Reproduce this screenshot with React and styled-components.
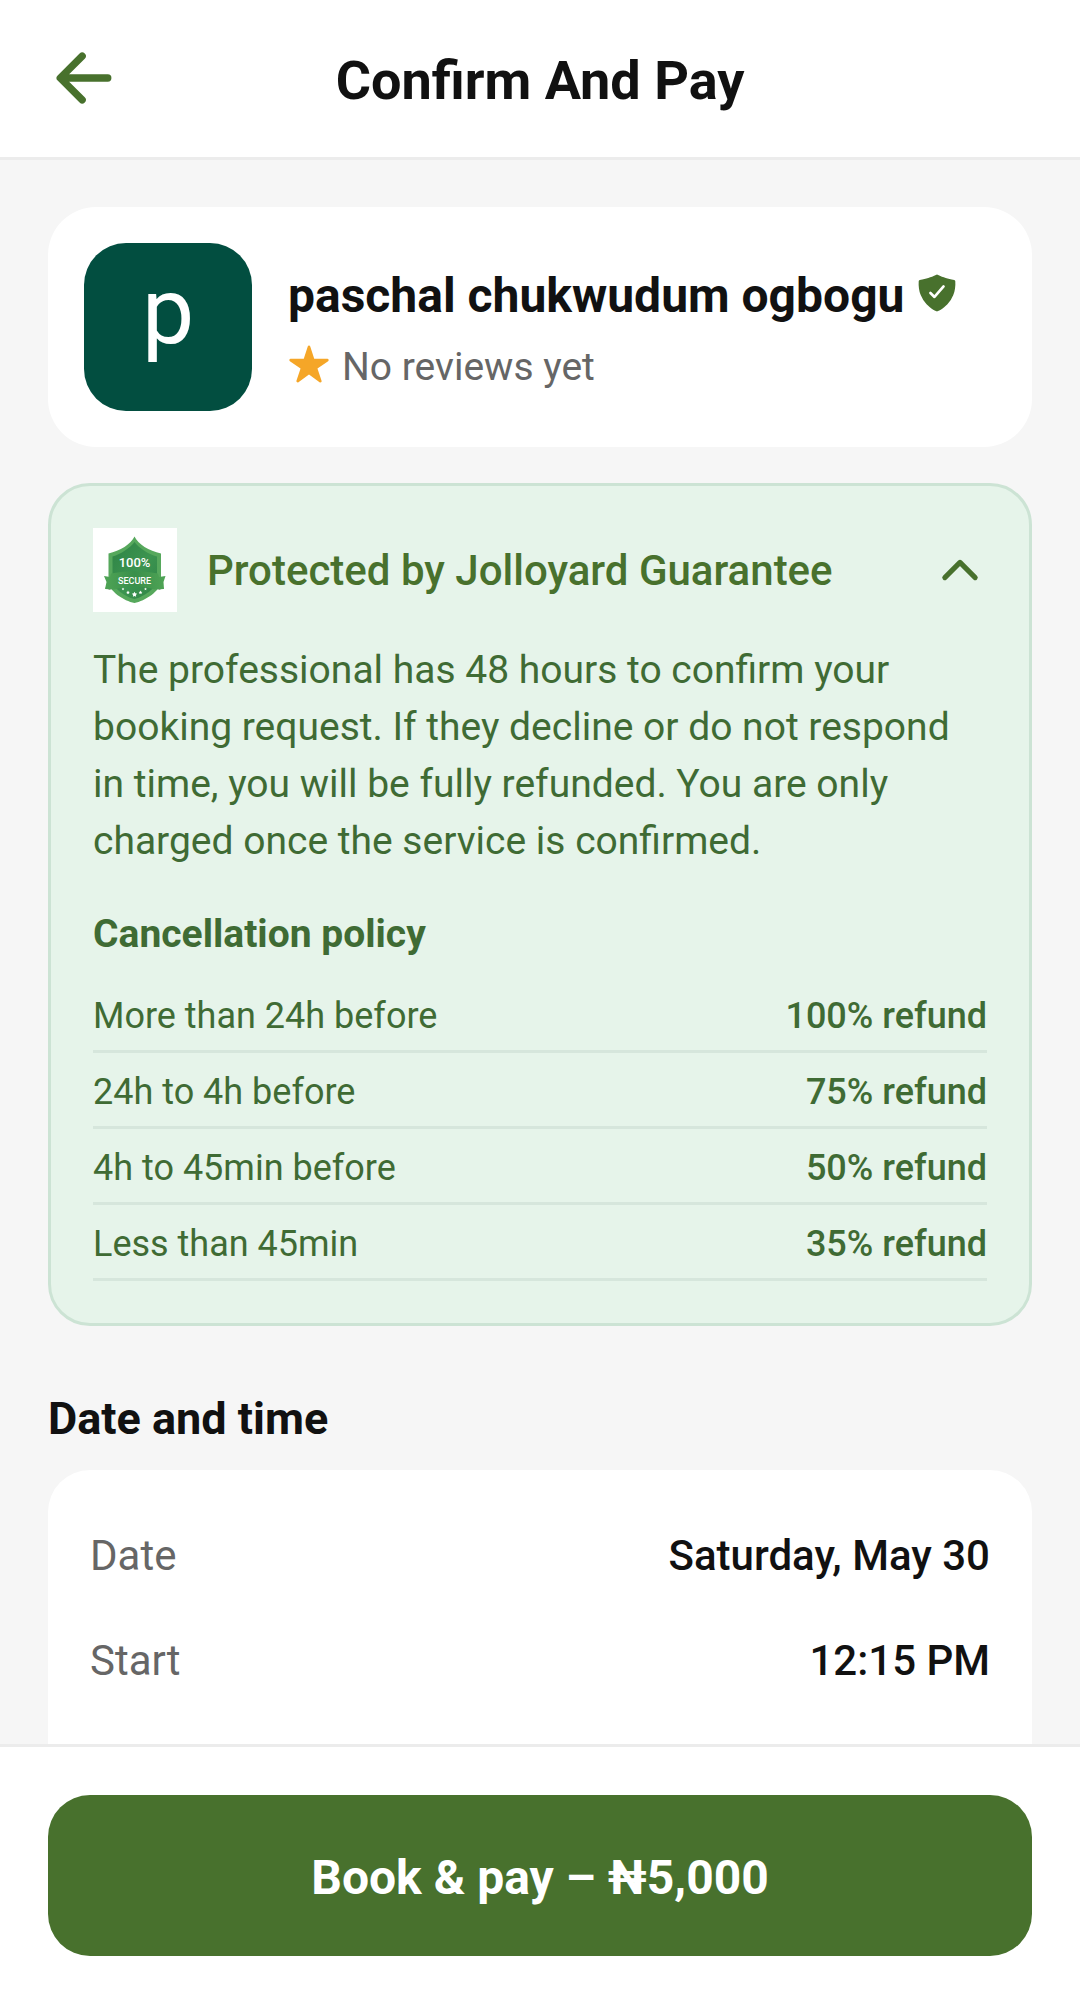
import React, { useState } from 'react';
import styled, { createGlobalStyle } from 'styled-components';
import { IoArrowBack, IoChevronUp, IoChevronDown, IoShieldCheckmark, IoStar } from 'react-icons/io5';

const color = {
  green: '#48712d',
  greenText: '#3f6b34',
  mint: '#e6f4ea',
  mintBorder: '#cce3d4',
  mintRule: '#d6e6dc',
  page: '#f6f6f6',
  rule: '#ececec',
  ink: '#111111',
  muted: '#666666',
  star: '#f5a628',
  avatar: '#024e40',
};

const GlobalStyle = createGlobalStyle`
  *, *::before, *::after { box-sizing: border-box; }
  body { margin: 0; background: ${color.page}; }
  body, button { font-family: Roboto, "Noto Sans", sans-serif; }
  h1, h2, h3, p, dl, dd { margin: 0; }
`;

const Screen = styled.div`
  display: flex;
  flex-direction: column;
  height: 100vh;
  color: ${color.ink};
`;

const Header = styled.header`
  flex: none;
  display: grid;
  grid-template-columns: 1fr auto 1fr;
  align-items: start;
  padding: 42px 48px 38px;
  background: #fff;
  border-bottom: 3px solid ${color.rule};
`;

const IconButton = styled.button`
  display: flex;
  align-items: center;
  justify-content: center;
  width: ${(p) => p.$size}px;
  height: ${(p) => p.$size}px;
  padding: 0;
  border: 0;
  background: none;
  color: ${color.green};
  cursor: pointer;

  svg { flex: none; }
`;

const Title = styled.h1`
  font-size: 54px;
  line-height: 77px;
  font-weight: 700;
`;

const Content = styled.main`
  flex: 1;
  min-height: 0;
  display: flex;
  flex-direction: column;
  padding: 47px 48px 0;
  overflow-y: auto;
  scrollbar-width: none;
`;

const ProfileCard = styled.section`
  flex: none;
  display: flex;
  align-items: center;
  gap: 36px;
  padding: 36px;
  border-radius: 48px;
  background: #fff;
`;

const Avatar = styled.div`
  flex: none;
  display: flex;
  align-items: center;
  justify-content: center;
  width: 168px;
  height: 168px;
  padding-bottom: 30px;
  border-radius: 42px;
  background: ${color.avatar};
  color: #fff;
  font-size: 93px;
  line-height: 108px;
`;

const ProfileInfo = styled.div`
  display: flex;
  flex-direction: column;
  gap: 14px;
`;

const IconLine = styled.div`
  display: flex;
  align-items: center;
  gap: 12px;
`;

const InlineIcon = styled.span`
  display: flex;
  padding-bottom: 6px;
  color: ${(p) => p.$color};
`;

const Name = styled.h2`
  font-size: 48px;
  line-height: 66px;
  font-weight: 700;
`;

const Reviews = styled.span`
  font-size: 39px;
  line-height: 48px;
  color: ${color.muted};
`;

const GuaranteeCard = styled.section`
  flex: none;
  margin-top: 36px;
  padding: 42px;
  border: 3px solid ${color.mintBorder};
  border-radius: 42px;
  background: ${color.mint};
  color: ${color.greenText};
`;

const GuaranteeHead = styled.div`
  display: flex;
  align-items: center;
  gap: 30px;
`;

const Badge = styled.div`
  flex: none;
  display: flex;
  width: 84px;
  height: 84px;
  background: #fff;
`;

const GuaranteeTitle = styled.h2`
  flex: 1;
  font-size: 42px;
  line-height: 57px;
  font-weight: 500;
  color: ${color.green};
`;

const GuaranteeText = styled.p`
  margin-top: 30px;
  font-size: 39px;
  line-height: 57px;
`;

const PolicyTitle = styled.h3`
  margin-top: 36px;
  font-size: 39px;
  line-height: 57px;
  font-weight: 700;
`;

const PolicyTable = styled.table`
  width: 100%;
  margin-top: 14px;
  border-spacing: 0;
  font-size: 36px;
  line-height: 43px;

  th, td {
    padding: 18px 0 12px;
    border-bottom: 3px solid ${color.mintRule};
  }
  th { text-align: left; font-weight: 400; }
  td { text-align: right; font-weight: 500; }
`;

const SectionTitle = styled.h2`
  flex: none;
  margin-top: 66px;
  font-size: 45px;
  line-height: 54px;
  font-weight: 700;
`;

const DetailCard = styled.dl`
  flex: 1 0 auto;
  margin-top: 24px;
  padding: 33px 42px;
  border-radius: 42px 42px 0 0;
  background: #fff;
`;

const DetailRow = styled.div`
  display: flex;
  justify-content: space-between;
  padding: 24px 0;
  font-size: 42px;
  line-height: 57px;

  dt { color: ${color.muted}; }
  dd { font-weight: 500; }
`;

const Footer = styled.footer`
  flex: none;
  padding: 48px;
  border-top: 3px solid ${color.rule};
  background: #fff;
`;

const PayButton = styled.button`
  display: block;
  width: 100%;
  padding: 50px 48px 46px;
  border: 0;
  border-radius: 42px;
  background: ${color.green};
  color: #fff;
  font-size: 48px;
  line-height: 65px;
  font-weight: 700;
  cursor: pointer;
`;

const policy = [
  ['More than 24h before', '100% refund'],
  ['24h to 4h before', '75% refund'],
  ['4h to 45min before', '50% refund'],
  ['Less than 45min', '35% refund'],
];

const details = [
  ['Date', 'Saturday, May 30'],
  ['Start', '12:15 PM'],
];

const badgeStars = [
  [30, 61, 1.4],
  [35, 64.5, 2],
  [41.5, 66.5, 2.8],
  [47.5, 64.5, 2],
  [52.5, 61, 1.4],
];

function starPoints(cx, cy, r) {
  return Array.from({ length: 10 }, (_, i) => {
    const a = (Math.PI / 5) * i - Math.PI / 2;
    const d = i % 2 ? r * 0.5 : r;
    return `${cx + d * Math.cos(a)},${cy + d * Math.sin(a)}`;
  }).join(' ');
}

function SecureBadge() {
  return (
    <svg width="84" height="84" viewBox="0 0 84 84" aria-hidden="true">
      <defs>
        <linearGradient id="shieldFill" x1="0" y1="0" x2="1" y2="1">
          <stop offset="0" stopColor="#2f8446" />
          <stop offset="0.55" stopColor="#3c9450" />
          <stop offset="1" stopColor="#2f8446" />
        </linearGradient>
        <linearGradient id="ribbonFill" x1="0" y1="0" x2="1" y2="0">
          <stop offset="0" stopColor="#4fa455" />
          <stop offset="0.5" stopColor="#3a8f4b" />
          <stop offset="1" stopColor="#4fa455" />
        </linearGradient>
      </defs>
      <path
        d="M41.5 8.5C45 16 56 23 68 25.5V54C67 63 52 73 41.5 75C31 73 16 63 15.5 54V25.5C27 23 38 16 41.5 8.5Z"
        fill="#56a85c"
      />
      <path
        d="M41.5 14C46 20 55 26 64 28.5V53C63 60 51 69 41.5 71C32 69 20 60 19.5 53V28.5C28 26 37 20 41.5 14Z"
        fill="url(#shieldFill)"
      />
      <path d="M12 60L17 62L20 58H16Z M71 60L66 62L63 58H67Z" fill="#8a9a80" />
      <path
        d="M11 48L17 49L18 45.5Q41.5 41 65 45.5L66 49L72.5 48L70.5 54L71 61L62 61.5Q41.5 55 21 61.5L12 61L13.5 54Z"
        fill="url(#ribbonFill)"
      />
      <g fill="#fff" textAnchor="middle" fontFamily="Roboto, sans-serif" fontWeight="500">
        <text x="41.5" y="39" fontSize="13">100%</text>
        <text x="41.5" y="56" fontSize="9">SECURE</text>
      </g>
      {badgeStars.map(([x, y, r]) => (
        <polygon key={x} points={starPoints(x, y, r)} fill="#fff" />
      ))}
    </svg>
  );
}

export default function App() {
  const [open, setOpen] = useState(true);

  return (
    <>
      <GlobalStyle />
      <Screen>
        <Header>
          <IconButton type="button" aria-label="Back" $size={72}>
            <IoArrowBack size={78} />
          </IconButton>
          <Title>Confirm And Pay</Title>
        </Header>

        <Content>
          <ProfileCard>
            <Avatar aria-hidden="true">p</Avatar>
            <ProfileInfo>
              <IconLine>
                <Name>paschal chukwudum ogbogu</Name>
                <InlineIcon $color={color.green}>
                  <IoShieldCheckmark size={42} />
                </InlineIcon>
              </IconLine>
              <IconLine>
                <InlineIcon $color={color.star}>
                  <IoStar size={42} />
                </InlineIcon>
                <Reviews>No reviews yet</Reviews>
              </IconLine>
            </ProfileInfo>
          </ProfileCard>

          <GuaranteeCard>
            <GuaranteeHead>
              <Badge>
                <SecureBadge />
              </Badge>
              <GuaranteeTitle>Protected by Jolloyard Guarantee</GuaranteeTitle>
              <IconButton
                type="button"
                $size={54}
                aria-label="Toggle guarantee details"
                aria-expanded={open}
                onClick={() => setOpen(!open)}
              >
                {open ? <IoChevronUp size={54} /> : <IoChevronDown size={54} />}
              </IconButton>
            </GuaranteeHead>
            {open && (
              <>
                <GuaranteeText>
                  The professional has 48 hours to confirm your booking request. If they decline or do
                  not respond in time, you will be fully refunded. You are only charged once the service
                  is confirmed.
                </GuaranteeText>
                <PolicyTitle id="policy-title">Cancellation policy</PolicyTitle>
                <PolicyTable aria-labelledby="policy-title">
                  <tbody>
                    {policy.map(([when, refund]) => (
                      <tr key={when}>
                        <th scope="row">{when}</th>
                        <td>{refund}</td>
                      </tr>
                    ))}
                  </tbody>
                </PolicyTable>
              </>
            )}
          </GuaranteeCard>

          <SectionTitle>Date and time</SectionTitle>
          <DetailCard>
            {details.map(([label, value]) => (
              <DetailRow key={label}>
                <dt>{label}</dt>
                <dd>{value}</dd>
              </DetailRow>
            ))}
          </DetailCard>
        </Content>

        <Footer>
          <PayButton type="button">Book &amp; pay – ₦5,000</PayButton>
        </Footer>
      </Screen>
    </>
  );
}
